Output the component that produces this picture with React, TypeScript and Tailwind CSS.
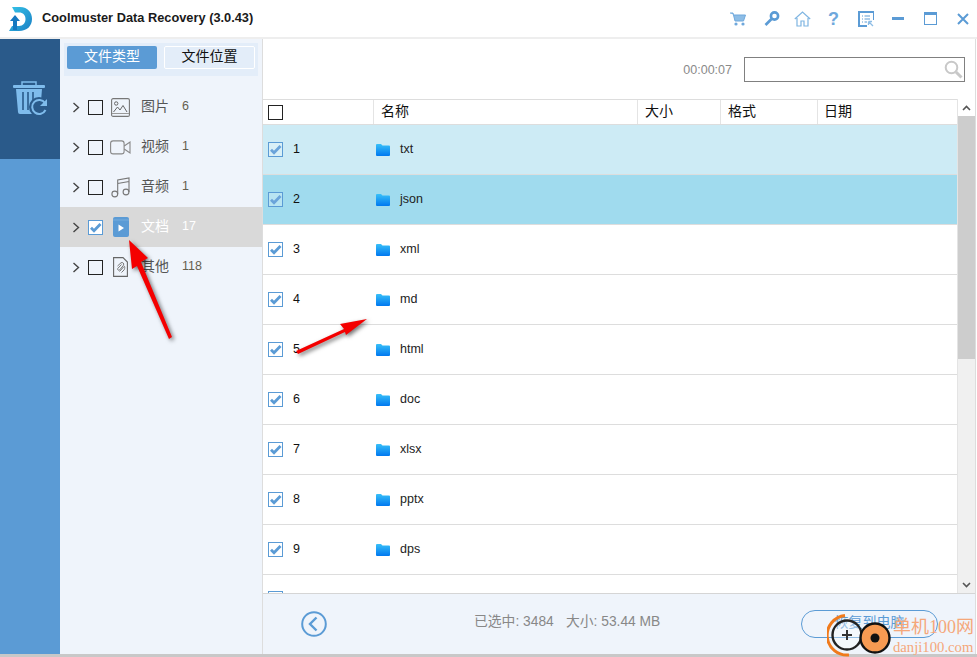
import React from "react";

const FONT = "font-['Liberation_Sans','Noto_Sans_CJK_SC',sans-serif]";

function Check({ checked, faded }: { checked?: boolean; faded?: boolean }) {
  return (
    <span
      className={`w-[15px] h-[15px] shrink-0 border flex items-center justify-center ${
        checked ? "border-[#5b9bd5]" : "border-[#222222]"
      } ${faded ? "bg-white/25" : checked ? "bg-white" : ""}`}
    >
      {checked && (
        <svg width="13" height="13" viewBox="0 0 13 13">
          <path d="M2 6.8 L5 9.8 L11.5 3" fill="none" stroke={faded ? "#6ba4da" : "#5b9bd5"} strokeWidth="2.8" />
        </svg>
      )}
    </span>
  );
}

function Chevron() {
  return (
    <svg width="8" height="11" viewBox="0 0 8 11" className="shrink-0">
      <path d="M1.5 1 L6.5 5.5 L1.5 10" fill="none" stroke="#444" strokeWidth="1.4" />
    </svg>
  );
}

const ImageIcon = () => (
  <svg width="19" height="19" viewBox="0 0 19 19">
    <rect x="0.6" y="0.6" width="17.8" height="17.8" rx="1.5" fill="none" stroke="#777" strokeWidth="1.1" />
    <circle cx="5.2" cy="5.5" r="1.7" fill="none" stroke="#666" />
    <path d="M2.5 14 L6.5 9 L9 12 L12 7.5 L16 14" fill="none" stroke="#666" />
    <path d="M1 15.5 H18" stroke="#999" />
  </svg>
);
const VideoIcon = () => (
  <svg width="21" height="15" viewBox="0 0 21 15">
    <rect x="0.6" y="0.9" width="13.5" height="13" rx="2.5" fill="none" stroke="#888" strokeWidth="1.1" />
    <path d="M14.2 6 L20 2 V13 L14.2 9" fill="none" stroke="#888" strokeWidth="1.1" />
  </svg>
);
const MusicIcon = () => (
  <svg width="19" height="21" viewBox="0 0 19 21">
    <circle cx="3.8" cy="17" r="2.9" fill="none" stroke="#777" strokeWidth="1.1" />
    <circle cx="15" cy="15" r="2.9" fill="none" stroke="#777" strokeWidth="1.1" />
    <path d="M6.7 17 V3 L18 1 V15 M6.7 6.5 L18 4.5" fill="none" stroke="#777" strokeWidth="1.1" />
  </svg>
);
const DocIcon = () => (
  <svg width="16" height="20" viewBox="0 0 16 20">
    <rect x="0" y="0" width="16" height="20" rx="2" fill="#5b9bd5" />
    <path d="M0 3 H16" stroke="#7fb2e0" strokeWidth="0.8" />
    <path d="M5.5 7.5 L11 11 L5.5 14.5 Z" fill="#fff" />
  </svg>
);
const OtherIcon = () => (
  <svg width="15" height="20" viewBox="0 0 15 20">
    <path d="M0.6 0.6 H10 L14.4 5 V19.4 H0.6 Z" fill="none" stroke="#666" strokeWidth="1.1" />
    <path d="M4.5 9 L8 5.8 C9.5 4.8 11.5 6.5 10.5 8.2 L6.8 12.8 C5.8 14 4 12.8 4.8 11.4 L8.5 7.5 M6.5 14.5 L11 9.5 C12 8.5 12 12 11 13 L8.5 15.5" fill="none" stroke="#777" strokeWidth="1" />
  </svg>
);

const Folder = () => (
  <svg width="14" height="12" viewBox="0 0 14 12" className="shrink-0">
    <defs>
      <linearGradient id="fg" x1="0" y1="0" x2="0" y2="1">
        <stop offset="0" stopColor="#38c0f8" />
        <stop offset="1" stopColor="#0078f0" />
      </linearGradient>
    </defs>
    <path d="M0 1 Q0 0 1 0 H5 L6.5 1.6 H13 Q14 1.6 14 2.6 V11 Q14 12 13 12 H1 Q0 12 0 11 Z" fill="url(#fg)" />
  </svg>
);

const tree = [
  { icon: <ImageIcon />, name: "图片", n: "6" },
  { icon: <VideoIcon />, name: "视频", n: "1" },
  { icon: <MusicIcon />, name: "音频", n: "1" },
  { icon: <DocIcon />, name: "文档", n: "17", active: true },
  { icon: <OtherIcon />, name: "其他", n: "118" },
];

const rows = ["txt", "json", "xml", "md", "html", "doc", "xlsx", "pptx", "dps"];

function Arrow({ className, d }: { className: string; d: string }) {
  return (
    <svg
      className={`absolute pointer-events-none drop-shadow-[2px_2px_2px_rgba(0,0,0,0.55)] ${className}`}
      width="120"
      height="140"
      viewBox="0 0 120 140"
    >
      <path d={d} fill="#f40000" />
    </svg>
  );
}

export default function App() {
  return (
    <div className={`${FONT} relative w-[977px] h-[657px] overflow-hidden bg-white flex flex-col text-[12px]`}>
      {/* title bar */}
      <div className="h-[39px] shrink-0 flex items-center border-b-2 border-[#eeeeee] pr-[8px]">
        <svg width="24" height="26" viewBox="0 0 24 26" className="ml-[9px] shrink-0">
          <defs>
            <linearGradient id="lg" x1="0" y1="0" x2="1" y2="1">
              <stop offset="0" stopColor="#35c4e8" />
              <stop offset="1" stopColor="#1a7fc4" />
            </linearGradient>
          </defs>
          <path d="M3 1 H11 C19 1 23 7 23 13 C23 20 18 25 10 25 H0 L3 20 H10 C14 20 16.5 17 16.5 13 C16.5 9 14 6.5 10 6.5 H6 Z" fill="url(#lg)" />
          <path d="M6 9 L11 15 H8 V24 H4 V15 H1 Z" fill="#1478c0" />
        </svg>
        <span className="ml-[9px] text-[12.8px] font-bold text-[#1a1a1a] leading-none">Coolmuster Data Recovery (3.0.43)</span>
        <div className="ml-auto flex items-center text-[#5b9bd5]">
          <svg width="16" height="14" viewBox="0 0 16 14" className="mr-[18px]"><path d="M0 1 H3 L5 9 H13.5 L15.5 3 H4" fill="#8dbde6" stroke="#6fa8dc" /><circle cx="6" cy="12" r="1.6" fill="#6fa8dc" /><circle cx="13" cy="12" r="1.6" fill="#6fa8dc" /></svg>
          <svg width="16" height="15" viewBox="0 0 16 15" className="mr-[14px]"><circle cx="10.5" cy="5" r="3.6" fill="none" stroke="#5b9bd5" strokeWidth="2.6" /><path d="M7.5 8 L1.5 14" stroke="#5b9bd5" strokeWidth="2.6" /></svg>
          <svg width="17" height="16" viewBox="0 0 17 16" className="mr-[17px]"><path d="M0.8 8 L8.5 1 L16.2 8 M3 7 V15 H7 V10 H10 V15 H14 V7" fill="none" stroke="#7fb5e2" strokeWidth="1.2" /></svg>
          <span className="w-[11px] text-[18px] font-bold leading-none mr-[19px] text-[#6fa8dc]">?</span>
          <svg width="16" height="16" viewBox="0 0 16 16" className="mr-[18px]"><path d="M16 9 V1 H1 V15 H9" fill="none" stroke="#5b9bd5" strokeWidth="2" /><path d="M4 5 H5 M6.5 5 H12 M4 8 H5 M6.5 8 H12 M4 11 H5 M6.5 11 H9" stroke="#5b9bd5" /><path d="M10.5 10.5 L15 15 M10.5 10.5 H14 M10.5 10.5 V14" stroke="#8dbde6" strokeWidth="1.3" /></svg>
          <span className="w-[12px] h-[3px] bg-[#5b9bd5] mr-[20px]" />
          <span className="w-[13px] h-[13px] border border-[#5b9bd5] border-t-[3px] mr-[20px]" />
          <svg width="12" height="12" viewBox="0 0 12 12"><path d="M1 1 L11 11 M11 1 L1 11" stroke="#5b9bd5" strokeWidth="2" /></svg>
        </div>
      </div>

      <div className="flex flex-1 min-h-0">
        {/* blue rail */}
        <div className="w-[60px] shrink-0 bg-[#5b9bd5] flex flex-col">
          <div className="h-[120px] bg-[#2a5a8a] flex items-center justify-center pb-[2px]">
            <svg width="34" height="35" viewBox="0 0 34 35">
              <path d="M9 4 V1 H23 V4" fill="none" stroke="#7fbcec" strokeWidth="1.5" />
              <rect x="0" y="4" width="32" height="3" rx="1" fill="#7fbcec" />
              <path d="M3 8 H29 L27 33 H7 Q5 33 5 31 Z" fill="#7fbcec" />
              <path d="M10 11 V29 M15 11 V29 M20 11 V20" stroke="#2a5a8a" strokeWidth="1.6" />
              <circle cx="26" cy="26" r="10" fill="#2a5a8a" />
              <path d="M32 22 A7 7 0 1 0 32.5 29" fill="none" stroke="#7fbcec" strokeWidth="2" />
              <path d="M34 18 V25 H27 Z" fill="#7fbcec" />
            </svg>
          </div>
        </div>

        {/* tree panel */}
        <div className="w-[203px] shrink-0 bg-[#eff4fb] border-r border-[#dddddd] flex flex-col">
          <div className="mx-[4px] mt-[4px] h-[33px] bg-[#e3edf9] flex items-start pt-[3px] gap-[7px] px-[3px] text-[14px]">
            <div className="w-[90px] h-[23px] rounded-[2px] bg-[#5b9bd5] text-white flex items-center justify-center pb-[2px]">文件类型</div>
            <div className="w-[91px] h-[23px] rounded-[2px] bg-[#e3edf9] border border-white text-[#111111] flex items-center justify-center pb-[2px]">文件位置</div>
          </div>
          <div className="mt-[11px] flex flex-col">
            {tree.map((t) => (
              <div key={t.name} className={`h-[40px] flex items-center ${t.active ? "bg-[#d9d9d9]" : ""}`}>
                <span className="ml-[12px] w-[8px] flex"><Chevron /></span>
                <span className="ml-[8px] flex"><Check checked={t.active} /></span>
                <span className="w-[21px] ml-[7px] flex items-center justify-center">{t.icon}</span>
                <span className={`ml-[10px] text-[14px] mb-[1px] ${t.active ? "text-white" : "text-[#555555]"}`}>{t.name}</span>
                <span className={`ml-[13px] text-[12.5px] mb-[1px] ${t.active ? "text-white" : "text-[#66604f]"}`}>{t.n}</span>
              </div>
            ))}
          </div>
        </div>

        {/* main */}
        <div className="flex-1 min-w-0 flex flex-col border-r border-[#dddddd] mr-[1px]">
          <div className="h-[60px] shrink-0 flex items-center justify-end pr-[10px]">
            <span className="text-[#8a8a8a] text-[12.5px] mr-[12px] mt-[2px]">00:00:07</span>
            <div className="w-[221px] h-[25px] border border-[#808080] flex items-center justify-end pr-[1px] mt-[1px]">
              <svg width="19" height="19" viewBox="0 0 19 19"><circle cx="7.5" cy="7.5" r="5.8" fill="none" stroke="#c8c8c8" strokeWidth="2" /><path d="M12 12 L17.5 17.5" stroke="#c8c8c8" strokeWidth="3" /></svg>
            </div>
          </div>

          <div className="flex-1 min-h-0 flex">
            <div className="flex-1 min-w-0 flex flex-col overflow-hidden">
              <div className="h-[26px] shrink-0 flex items-center border-y border-[#dddddd] text-[14px] text-[#111111] leading-none">
                <div className="w-[110px] h-[24px] flex items-center pl-[4px] border-r border-[#e4e4e4] ml-[1px]"><Check /></div>
                <div className="w-[264px] h-[24px] flex items-center pl-[7px] pb-[2px] border-r border-[#e4e4e4]">名称</div>
                <div className="w-[83px] h-[24px] flex items-center pl-[7px] pb-[2px] border-r border-[#e4e4e4]">大小</div>
                <div className="w-[97px] h-[24px] flex items-center pl-[7px] pb-[2px] border-r border-[#e4e4e4]">格式</div>
                <div className="flex-1 h-[24px] flex items-center pl-[6px] pb-[2px]">日期</div>
              </div>
              <div className="flex-1 min-h-0 overflow-hidden">
                {rows.map((name, i) => (
                  <div
                    key={name}
                    className={`h-[50px] flex items-center border-b border-[#dddddd] ${
                      i === 0 ? "bg-[#cdebf5]" : i === 1 ? "bg-[#a0dbee]" : ""
                    }`}
                  >
                    <span className="ml-[5px] flex mb-[1px]"><Check checked faded={i < 2} /></span>
                    <span className="w-[15px] ml-[10px] text-[12.5px] text-[#111111]">{i + 1}</span>
                    <span className="ml-[68px] flex"><Folder /></span>
                    <span className="ml-[10px] text-[12.5px] text-[#222222]">{name}</span>
                  </div>
                ))}
                <div className="h-[20px] pt-[16px] pl-[5px] flex items-start"><span className="w-[15px] h-[15px] border border-[#5b9bd5]" /></div>
              </div>
            </div>
            {/* scrollbar */}
            <div className="w-[18px] shrink-0 bg-[#f0f0f0] flex flex-col border-l border-[#e4e4e4]">
              <div className="h-[17px] bg-white flex items-center justify-center">
                <svg width="9" height="6" viewBox="0 0 9 6"><path d="M1 5 L4.5 1.5 L8 5" fill="none" stroke="#555" strokeWidth="1.6" /></svg>
              </div>
              <div className="h-[243px] bg-[#cdcdcd]" />
              <div className="flex-1" />
              <div className="h-[17px] flex items-center justify-center">
                <svg width="9" height="6" viewBox="0 0 9 6"><path d="M1 1 L4.5 4.5 L8 1" fill="none" stroke="#555" strokeWidth="1.6" /></svg>
              </div>
            </div>
          </div>

          {/* footer */}
          <div className="h-[61px] shrink-0 bg-[#eff4fb] border-t border-[#d5d5d5] flex items-center text-[#888888]">
            <svg width="26" height="26" viewBox="0 0 26 26" className="ml-[38px] shrink-0">
              <circle cx="13" cy="13" r="11.8" fill="none" stroke="#5b9bd5" strokeWidth="2" />
              <path d="M15.5 6.5 L9 13 L15.5 19.5" fill="none" stroke="#5b9bd5" strokeWidth="2.4" />
            </svg>
            <span className="ml-[147px] w-[79px] text-[13.8px] whitespace-nowrap mt-[-3px]">已选中: 3484</span>
            <span className="ml-[13px] w-[95px] text-[13.8px] whitespace-nowrap mt-[-3px]">大小: 53.44 MB</span>
            <div className="ml-[140px] w-[137px] h-[28px] rounded-full border border-[#5b9bd5] text-[#5b9bd5] text-[14px] flex items-center justify-center pb-[3px]">恢复到电脑</div>
          </div>
        </div>
      </div>
      <div className="h-[3px] shrink-0 bg-[#c8c8c8]" />

      {/* annotation arrows */}
      <Arrow className="left-[100px] top-[225px]" d="M29 15 L48 33 L41 37 L72 112 L69 114 L37 41 L32 44 Z" />
      <Arrow className="left-[290px] top-[310px]" d="M77 9 L50 14 L54 19 L6 41 L8 44 L55 22 L56 25 Z" />

      {/* watermark */}
      <div className="absolute left-[827px] top-[613px] w-[150px] h-[44px]">
        <svg className="absolute left-0 top-0" width="70" height="44" viewBox="0 0 70 44">
          <path d="M18 2.5 A19 19 0 0 0 22 42" fill="none" stroke="#f07a1c" strokeWidth="3" />
          <circle cx="20" cy="22" r="14.5" fill="#ffffff" fillOpacity="0.35" stroke="#222" strokeWidth="2.4" />
          <path d="M15 22 H25 M20 17 V27" stroke="#333" strokeWidth="2" />
          <circle cx="48" cy="25" r="14.5" fill="#f79a52" stroke="#111" strokeWidth="2.4" />
          <circle cx="48" cy="25" r="4.5" fill="#111" />
        </svg>
        <span className="absolute left-[66px] top-[1px] text-[18px] text-[#f5a77a] whitespace-nowrap font-['Liberation_Serif','Noto_Sans_CJK_SC',serif] leading-[26px]">单机100网</span>
        <span className="absolute left-[66px] top-[25px] text-[14.7px] text-[#f5a77a] whitespace-nowrap font-['Liberation_Serif',serif] leading-[18px]">danji100.com</span>
      </div>
    </div>
  );
}
